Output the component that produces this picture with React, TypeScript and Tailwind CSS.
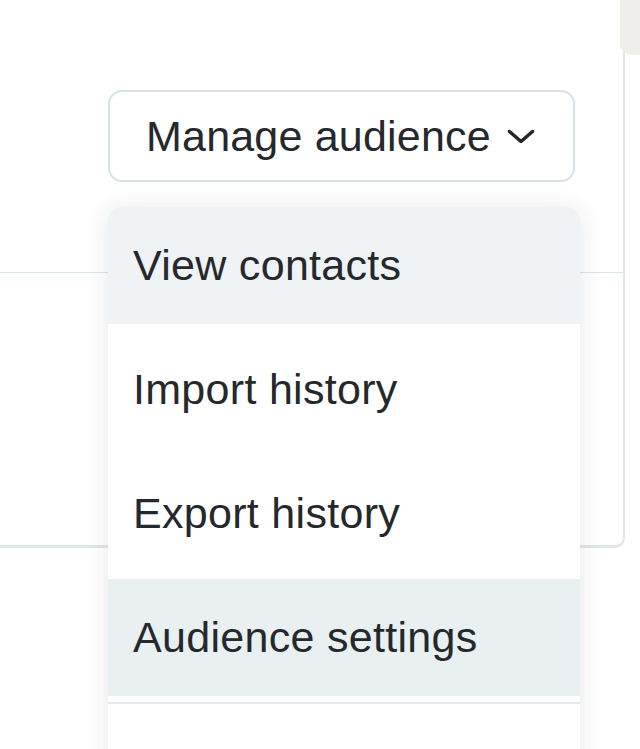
const items = [
  { label: "View contacts", bg: "bg-[#eff3f6]" },
  { label: "Import history", bg: "bg-white" },
  { label: "Export history", bg: "bg-white" },
  { label: "Audience settings", bg: "bg-[#e8f0f2]" },
];

function Chevron() {
  return (
    <svg width="28" height="15" viewBox="0 0 28 15" fill="none" className="shrink-0">
      <path d="M2.5 2.5 L14 12.5 L25.5 2.5" stroke="#23262a" strokeWidth="3.5" strokeLinecap="round" strokeLinejoin="round" />
    </svg>
  );
}

export default function App() {
  return (
    <div
      className="relative w-[640px] h-[749px] overflow-hidden bg-white text-[#25282c]"
      style={{ fontFamily: '"Liberation Sans", Arial, sans-serif' }}
    >
      {/* Card behind */}
      <div className="w-[625px] h-[548px] border-r-2 border-b-[3px] border-[#dfe6ec] rounded-br-[10px]">
        <div className="h-[273px] border-b-[1.5px] border-[#dbe3ea] pl-[108px] pt-[90px]">
          <button className="flex items-center w-[467px] h-[92px] pl-[36px] pr-[38px] border-2 border-[#d8e1e8] rounded-[14px] bg-white text-[43px] tracking-[0.2px] leading-none">
            <span className="flex-1 text-left">Manage audience</span>
            <Chevron />
          </button>
        </div>
      </div>

      {/* Top-right beige tab */}
      <div className="absolute top-0 right-0 w-[20px] h-[55px] rounded-bl-[12px] bg-[#efeeeb]" />

      {/* Dropdown menu */}
      <div className="absolute left-[108px] top-[207px] w-[472px] h-[600px] bg-white rounded-t-[12px] overflow-hidden shadow-[0_2px_24px_rgba(30,40,50,0.11)]">
        <div className="flex flex-col gap-[7px]">
          {items.map((it) => (
            <div key={it.label} className={`h-[117px] flex items-center pl-[25px] text-[43px] tracking-[0.3px] leading-none ${it.bg}`}>
              {it.label}
            </div>
          ))}
        </div>
        <div className="mt-[6px] h-[2px] bg-[#e3e9ee]" />
      </div>
    </div>
  );
}
